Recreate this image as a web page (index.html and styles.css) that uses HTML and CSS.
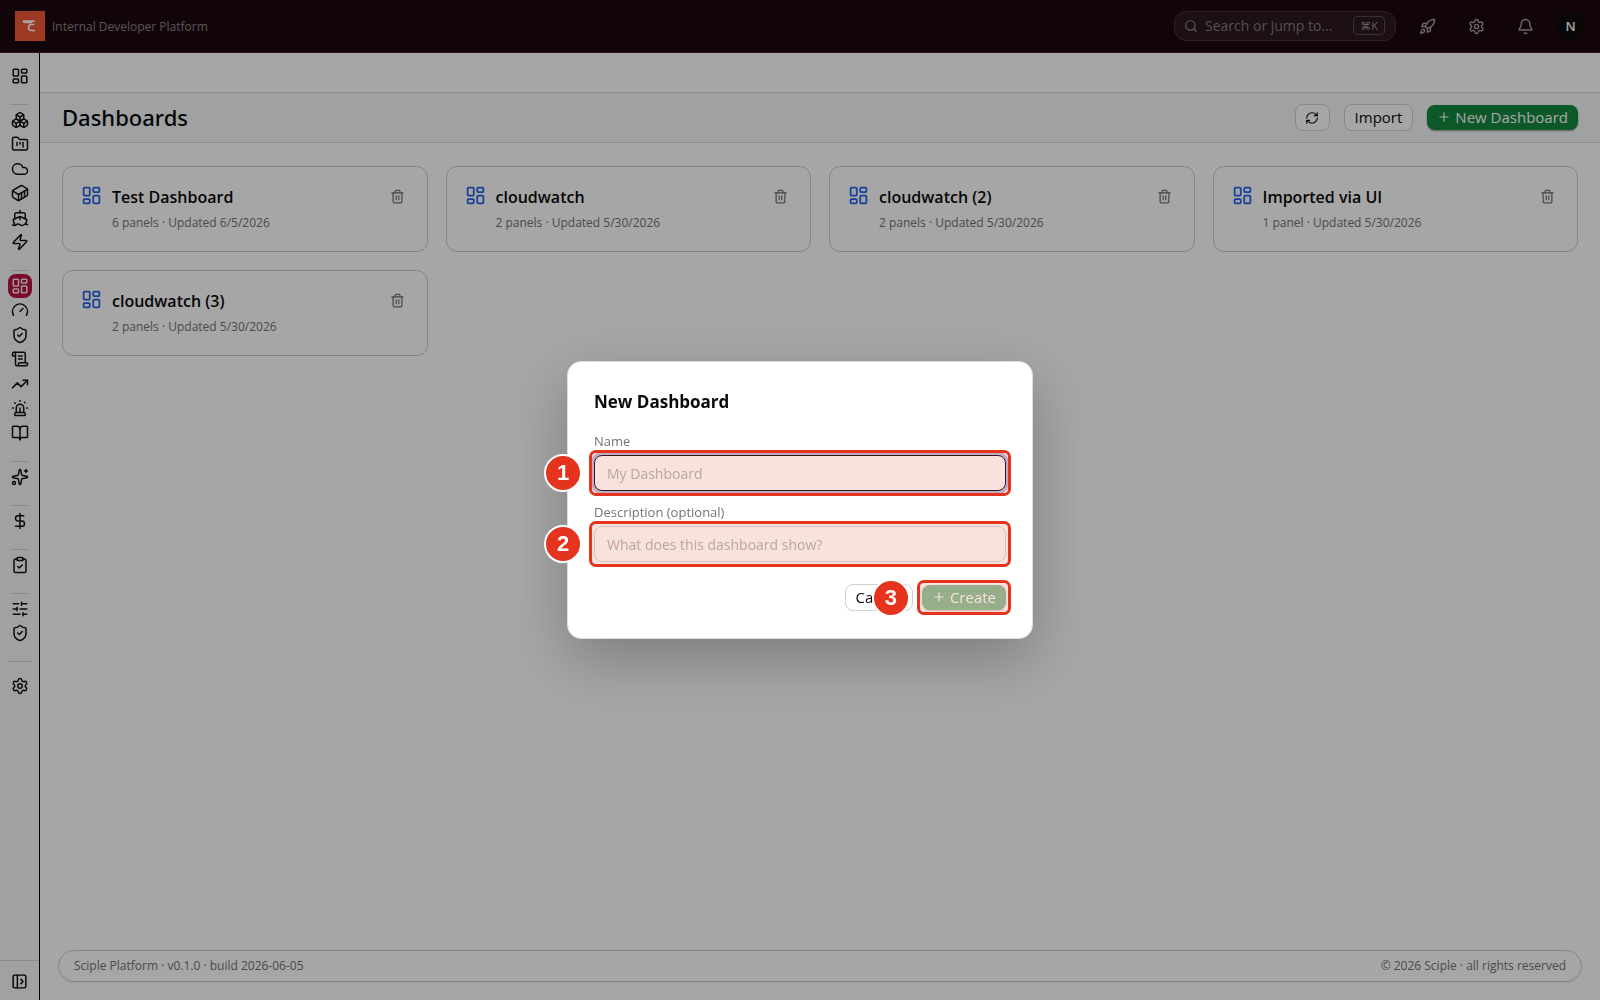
FILE: index.html
```html
<!DOCTYPE html>
<html lang="en">
<head>
<meta charset="UTF-8">
<meta name="viewport" content="width=device-width, initial-scale=1">
<title>Dashboards</title>
<link rel="stylesheet" href="styles.css">
</head>
<body>
	<!-- icon sprite -->
	<svg class="sprite" aria-hidden="true">
		<symbol id="i-dash" viewBox="0 0 24 24"><rect width="7" height="9" x="3" y="3" rx="1"/><rect width="7" height="5" x="14" y="3" rx="1"/><rect width="7" height="9" x="14" y="12" rx="1"/><rect width="7" height="5" x="3" y="16" rx="1"/></symbol>
		<symbol id="i-boxes" viewBox="0 0 24 24"><path d="M2.97 12.92A2 2 0 0 0 2 14.63v3.24a2 2 0 0 0 .97 1.71l3 1.8a2 2 0 0 0 2.06 0L12 19v-5.5l-5-3-4.03 2.42Z"/><path d="m7 16.5-4.74-2.85"/><path d="m7 16.5 5-3"/><path d="M7 16.5v5.17"/><path d="M12 13.5V19l3.97 2.38a2 2 0 0 0 2.06 0l3-1.8a2 2 0 0 0 .97-1.71v-3.24a2 2 0 0 0-.97-1.71L17 10.5l-5 3Z"/><path d="m17 16.5-5-3"/><path d="m17 16.5 4.74-2.85"/><path d="M17 16.5v5.17"/><path d="M7.97 4.42A2 2 0 0 0 7 6.13v4.37l5 3 5-3V6.13a2 2 0 0 0-.97-1.71l-3-1.8a2 2 0 0 0-2.06 0l-3 1.8Z"/><path d="M12 8 7.26 5.15"/><path d="m12 8 4.74-2.85"/><path d="M12 13.5V8"/></symbol>
		<symbol id="i-folder" viewBox="0 0 24 24"><path d="M4 20h16a2 2 0 0 0 2-2V8a2 2 0 0 0-2-2h-7.93a2 2 0 0 1-1.66-.9l-.82-1.2A2 2 0 0 0 7.93 3H4a2 2 0 0 0-2 2v13c0 1.1.9 2 2 2Z"/><path d="M8 10v4"/><path d="M12 10v2"/><path d="M16 10v6"/></symbol>
		<symbol id="i-cloud" viewBox="0 0 24 24"><path d="M17.5 19H9a7 7 0 1 1 6.71-9h1.79a4.5 4.5 0 1 1 0 9Z"/></symbol>
		<symbol id="i-container" viewBox="0 0 24 24"><path d="M22 7.7c0-.6-.4-1.2-.8-1.5l-6.3-3.9a1.72 1.72 0 0 0-1.7 0l-10.3 6c-.5.2-.9.8-.9 1.4v6.6c0 .5.4 1.2.8 1.5l6.3 3.9a1.72 1.72 0 0 0 1.7 0l10.3-6c.5-.3.9-1 .9-1.5Z"/><path d="M10 21.9V14L2.1 9.1"/><path d="m10 14 11.9-6.9"/><path d="M14 19.8v-8.1"/><path d="M18 17.5V9.4"/></symbol>
		<symbol id="i-ship" viewBox="0 0 24 24"><path d="M12 10.189V14"/><path d="M12 2v3"/><path d="M19 13V7a2 2 0 0 0-2-2H7a2 2 0 0 0-2 2v6"/><path d="M19.38 20A11.6 11.6 0 0 0 21 14l-8.188-3.639a2 2 0 0 0-1.624 0L3 14a11.6 11.6 0 0 0 2.81 7.76"/><path d="M2 21c.6.5 1.2 1 2.5 1 2.5 0 2.5-2 5-2 1.3 0 1.9.5 2.5 1s1.2 1 2.5 1c2.5 0 2.5-2 5-2 1.3 0 1.9.5 2.5 1"/></symbol>
		<symbol id="i-zap" viewBox="0 0 24 24"><path d="M4 14a1 1 0 0 1-.78-1.63l9.9-10.2a.5.5 0 0 1 .86.46l-1.92 6.02A1 1 0 0 0 13 10h7a1 1 0 0 1 .78 1.63l-9.9 10.2a.5.5 0 0 1-.86-.46l1.92-6.02A1 1 0 0 0 11 14z"/></symbol>
		<symbol id="i-gauge" viewBox="0 0 24 24"><path d="m12 14 4-4"/><path d="M3.34 19a10 10 0 1 1 17.32 0"/></symbol>
		<symbol id="i-shield" viewBox="0 0 24 24"><path d="M20 13c0 5-3.5 7.5-7.66 8.95a1 1 0 0 1-.67-.01C7.5 20.5 4 18 4 13V6a1 1 0 0 1 1-1c2 0 4.5-1.2 6.24-2.72a1.17 1.17 0 0 1 1.52 0C14.51 3.81 17 5 19 5a1 1 0 0 1 1 1z"/><path d="m9 12 2 2 4-4"/></symbol>
		<symbol id="i-scroll" viewBox="0 0 24 24"><path d="M15 12h-5"/><path d="M15 8h-5"/><path d="M19 17V5a2 2 0 0 0-2-2H4"/><path d="M8 21h12a2 2 0 0 0 2-2v-1a1 1 0 0 0-1-1H11a1 1 0 0 0-1 1v1a2 2 0 1 1-4 0V5a2 2 0 1 0-4 0v2a1 1 0 0 0 1 1h3"/></symbol>
		<symbol id="i-trend" viewBox="0 0 24 24"><path d="M16 7h6v6"/><path d="m22 7-8.5 8.5-5-5L2 17"/></symbol>
		<symbol id="i-siren" viewBox="0 0 24 24"><path d="M7 18v-6a5 5 0 1 1 10 0v6"/><path d="M5 21a1 1 0 0 0 1 1h12a1 1 0 0 0 1-1v-1a2 2 0 0 0-2-2H7a2 2 0 0 0-2 2z"/><path d="M21 12h1"/><path d="M18.5 4.5 18 5"/><path d="M2 12h1"/><path d="M12 2v1"/><path d="m4.929 4.929.707.707"/><path d="M12 12v6"/></symbol>
		<symbol id="i-book" viewBox="0 0 24 24"><path d="M12 7v14"/><path d="M3 18a1 1 0 0 1-1-1V4a1 1 0 0 1 1-1h5a4 4 0 0 1 4 4 4 4 0 0 1 4-4h5a1 1 0 0 1 1 1v13a1 1 0 0 1-1 1h-6a3 3 0 0 0-3 3 3 3 0 0 0-3-3z"/></symbol>
		<symbol id="i-sparkles" viewBox="0 0 24 24"><path d="M11.017 2.814a1 1 0 0 1 1.966 0l1.051 5.558a2 2 0 0 0 1.594 1.594l5.558 1.051a1 1 0 0 1 0 1.966l-5.558 1.051a2 2 0 0 0-1.594 1.594l-1.051 5.558a1 1 0 0 1-1.966 0l-1.051-5.558a2 2 0 0 0-1.594-1.594l-5.558-1.051a1 1 0 0 1 0-1.966l5.558-1.051a2 2 0 0 0 1.594-1.594z"/><path d="M20 2v4"/><path d="M22 4h-4"/><circle cx="4" cy="20" r="2"/></symbol>
		<symbol id="i-dollar" viewBox="0 0 24 24"><path d="M12 2v20"/><path d="M17 5H9.5a3.5 3.5 0 0 0 0 7h5a3.5 3.5 0 0 1 0 7H6"/></symbol>
		<symbol id="i-clipboard" viewBox="0 0 24 24"><rect width="8" height="4" x="8" y="2" rx="1"/><path d="M16 4h2a2 2 0 0 1 2 2v14a2 2 0 0 1-2 2H6a2 2 0 0 1-2-2V6a2 2 0 0 1 2-2h2"/><path d="m9 14 2 2 4-4"/></symbol>
		<symbol id="i-sliders" viewBox="0 0 24 24"><path d="M10 5H3"/><path d="M12 19H3"/><path d="M14 3v4"/><path d="M16 17v4"/><path d="M21 12h-9"/><path d="M21 19h-5"/><path d="M21 5h-7"/><path d="M8 10v4"/><path d="M8 12H3"/></symbol>
		<symbol id="i-gear" viewBox="0 0 24 24"><path d="M9.671 4.136a2.34 2.34 0 0 1 4.659 0 2.34 2.34 0 0 0 3.319 1.915 2.34 2.34 0 0 1 2.33 4.033 2.34 2.34 0 0 0 0 3.831 2.34 2.34 0 0 1-2.33 4.033 2.34 2.34 0 0 0-3.319 1.915 2.34 2.34 0 0 1-4.659 0 2.34 2.34 0 0 0-3.32-1.915 2.34 2.34 0 0 1-2.33-4.033 2.34 2.34 0 0 0 0-3.831A2.34 2.34 0 0 1 6.35 6.051a2.34 2.34 0 0 0 3.319-1.915"/><circle cx="12" cy="12" r="3"/></symbol>
		<symbol id="i-panel" viewBox="0 0 24 24"><rect width="18" height="18" x="3" y="3" rx="2"/><path d="M9 3v18"/><path d="m14 9 3 3-3 3"/></symbol>
		<symbol id="i-search" viewBox="0 0 24 24"><circle cx="11" cy="11" r="8"/><path d="m21 21-4.3-4.3"/></symbol>
		<symbol id="i-rocket" viewBox="0 0 24 24"><path d="M4.5 16.5c-1.5 1.26-2 5-2 5s3.74-.5 5-2c.71-.84.7-2.13-.09-2.91a2.18 2.18 0 0 0-2.91-.09z"/><path d="m12 15-3-3a22 22 0 0 1 2-3.95A12.88 12.88 0 0 1 22 2c0 2.72-.78 7.5-6 11a22.35 22.35 0 0 1-4 2z"/><path d="M9 12H4s.55-3.03 2-4c1.62-1.08 5 0 5 0"/><path d="M12 15v5s3.03-.55 4-2c1.08-1.62 0-5 0-5"/></symbol>
		<symbol id="i-bell" viewBox="0 0 24 24"><path d="M10.268 21a2 2 0 0 0 3.464 0"/><path d="M3.262 15.326A1 1 0 0 0 4 17h16a1 1 0 0 0 .74-1.673C19.41 13.956 18 12.499 18 8A6 6 0 0 0 6 8c0 4.499-1.411 5.956-2.738 7.326"/></symbol>
		<symbol id="i-refresh" viewBox="0 0 24 24"><path d="M3 12a9 9 0 0 1 9-9 9.75 9.75 0 0 1 6.74 2.74L21 8"/><path d="M21 3v5h-5"/><path d="M21 12a9 9 0 0 1-9 9 9.75 9.75 0 0 1-6.74-2.74L3 16"/><path d="M8 16H3v5"/></symbol>
		<symbol id="i-plus" viewBox="0 0 24 24"><path d="M5 12h14"/><path d="M12 5v14"/></symbol>
		<symbol id="i-trash" viewBox="0 0 24 24"><path d="M3 6h18"/><path d="M19 6v14a2 2 0 0 1-2 2H7a2 2 0 0 1-2-2V6"/><path d="M8 6V4a2 2 0 0 1 2-2h4a2 2 0 0 1 2 2v2"/><path d="M10 11v6"/><path d="M14 11v6"/></symbol>
	</svg>

	<div class="app">
		<header class="topbar">
			<a class="brand" href="#">
				<svg class="logo" viewBox="0 0 30 30"><rect width="30" height="30" fill="#f05a36"/><path d="M8 10h9q2 0 2.500 1M8 10q1 1.500 3 1.500h6M19.500 13.500h-3q-3 0-3 3t3 3h3.500" fill="none" stroke="#fff" stroke-width="1.600"/></svg>
				<span>Internal Developer Platform</span>
			</a>
			<div class="topbar-right">
				<label class="search">
					<svg class="icon"><use href="#i-search"/></svg>
					<input type="text" placeholder="Search or jump to..." aria-label="Search">
					<kbd>⌘K</kbd>
				</label>
				<button class="top-btn" aria-label="Deploy"><svg class="icon"><use href="#i-rocket"/></svg></button>
				<button class="top-btn" aria-label="Settings"><svg class="icon"><use href="#i-gear"/></svg></button>
				<button class="top-btn" aria-label="Notifications"><svg class="icon"><use href="#i-bell"/></svg></button>
				<button class="avatar">N</button>
			</div>
		</header>

		<div class="body">
			<nav class="sidebar">
				<ul>
					<li><a href="#"><svg class="icon"><use href="#i-dash"/></svg></a></li>
				</ul>
				<ul>
					<li><a href="#"><svg class="icon"><use href="#i-boxes"/></svg></a></li>
					<li><a href="#"><svg class="icon"><use href="#i-folder"/></svg></a></li>
					<li><a href="#"><svg class="icon"><use href="#i-cloud"/></svg></a></li>
					<li><a href="#"><svg class="icon"><use href="#i-container"/></svg></a></li>
					<li><a href="#"><svg class="icon"><use href="#i-ship"/></svg></a></li>
					<li><a href="#"><svg class="icon"><use href="#i-zap"/></svg></a></li>
				</ul>
				<ul>
					<li><a class="active" href="#"><svg class="icon"><use href="#i-dash"/></svg></a></li>
					<li><a href="#"><svg class="icon"><use href="#i-gauge"/></svg></a></li>
					<li><a href="#"><svg class="icon"><use href="#i-shield"/></svg></a></li>
					<li><a href="#"><svg class="icon"><use href="#i-scroll"/></svg></a></li>
					<li><a href="#"><svg class="icon"><use href="#i-trend"/></svg></a></li>
					<li><a href="#"><svg class="icon"><use href="#i-siren"/></svg></a></li>
					<li><a href="#"><svg class="icon"><use href="#i-book"/></svg></a></li>
				</ul>
				<ul>
					<li><a href="#"><svg class="icon"><use href="#i-sparkles"/></svg></a></li>
				</ul>
				<ul>
					<li><a href="#"><svg class="icon"><use href="#i-dollar"/></svg></a></li>
				</ul>
				<ul>
					<li><a href="#"><svg class="icon"><use href="#i-clipboard"/></svg></a></li>
				</ul>
				<ul>
					<li><a href="#"><svg class="icon"><use href="#i-sliders"/></svg></a></li>
					<li><a href="#"><svg class="icon"><use href="#i-shield"/></svg></a></li>
				</ul>
				<ul class="system">
					<li><a href="#"><svg class="icon"><use href="#i-gear"/></svg></a></li>
				</ul>
				<div class="sidebar-foot">
					<button aria-label="Expand sidebar"><svg class="icon"><use href="#i-panel"/></svg></button>
				</div>
			</nav>

			<main class="main">
				<div class="tabs"></div>
				<div class="page-head">
					<h1>Dashboards</h1>
					<div class="actions">
						<button class="btn btn-icon" aria-label="Refresh"><svg class="icon"><use href="#i-refresh"/></svg></button>
						<button class="btn">Import</button>
						<button class="btn btn-primary"><svg class="icon"><use href="#i-plus"/></svg>New Dashboard</button>
					</div>
				</div>

				<div class="cards">
					<article class="card">
						<svg class="icon"><use href="#i-dash"/></svg>
						<div class="card-text">
							<h2>Test Dashboard</h2>
							<p>6 panels · Updated 6/5/2026</p>
						</div>
						<button class="delete" aria-label="Delete"><svg class="icon"><use href="#i-trash"/></svg></button>
					</article>
					<article class="card">
						<svg class="icon"><use href="#i-dash"/></svg>
						<div class="card-text">
							<h2>cloudwatch</h2>
							<p>2 panels · Updated 5/30/2026</p>
						</div>
						<button class="delete" aria-label="Delete"><svg class="icon"><use href="#i-trash"/></svg></button>
					</article>
					<article class="card">
						<svg class="icon"><use href="#i-dash"/></svg>
						<div class="card-text">
							<h2>cloudwatch (2)</h2>
							<p>2 panels · Updated 5/30/2026</p>
						</div>
						<button class="delete" aria-label="Delete"><svg class="icon"><use href="#i-trash"/></svg></button>
					</article>
					<article class="card">
						<svg class="icon"><use href="#i-dash"/></svg>
						<div class="card-text">
							<h2>Imported via UI</h2>
							<p>1 panel · Updated 5/30/2026</p>
						</div>
						<button class="delete" aria-label="Delete"><svg class="icon"><use href="#i-trash"/></svg></button>
					</article>
					<article class="card">
						<svg class="icon"><use href="#i-dash"/></svg>
						<div class="card-text">
							<h2>cloudwatch (3)</h2>
							<p>2 panels · Updated 5/30/2026</p>
						</div>
						<button class="delete" aria-label="Delete"><svg class="icon"><use href="#i-trash"/></svg></button>
					</article>
				</div>

				<footer class="footer">
					<span>Sciple Platform · v0.1.0 · build 2026-06-05</span>
					<span>© 2026 Sciple · all rights reserved</span>
				</footer>
			</main>
		</div>
	</div>

	<div class="overlay">
		<form class="modal" role="dialog" aria-labelledby="modal-title">
			<h2 id="modal-title">New Dashboard</h2>
			<label for="name">Name</label>
			<div class="field">
				<input class="focused" id="name" type="text" placeholder="My Dashboard">
				<div class="mark"></div>
				<div class="step">1</div>
			</div>
			<label for="desc">Description (optional)</label>
			<div class="field">
				<input id="desc" type="text" placeholder="What does this dashboard show?">
				<div class="mark"></div>
				<div class="step">2</div>
			</div>
			<div class="modal-actions">
				<button class="btn" type="button">Cancel</button>
				<div class="field">
					<button class="btn btn-primary" type="submit" disabled><svg class="icon"><use href="#i-plus"/></svg>Create</button>
					<div class="mark"></div>
					<div class="step">3</div>
				</div>
			</div>
		</form>
	</div>
</body>
</html>
```
FILE: styles.css
```css
* {
	box-sizing: border-box;
}

body {
	margin: 0;
	font-family: "Open Sans", "Noto Sans", sans-serif;
	font-size: 12px;
	color: #0a0a0a;
	background: #fff;
}

h1, h2, p, ul {
	margin: 0;
	padding: 0;
}

button, input {
	font-family: inherit;
}

button {
	cursor: pointer;
}

.sprite {
	display: none;
}

.icon {
	width: 18px;
	height: 18px;
	flex: none;
	fill: none;
	stroke: currentColor;
	stroke-width: 2;
	stroke-linecap: round;
	stroke-linejoin: round;
}

.app {
	display: flex;
	flex-direction: column;
	min-height: 100vh;
}

/* top bar */
.topbar {
	display: flex;
	align-items: center;
	justify-content: space-between;
	height: 53px;
	padding: 0 16px 0 15px;
	background: #1c0810;
	border-bottom: 1px solid #45202e;
	color: #a89ea2;
}

.brand {
	display: flex;
	align-items: center;
	gap: 7px;
	color: #8f8386;
	text-decoration: none;
}

.logo {
	width: 30px;
	height: 30px;
}

.topbar-right {
	display: flex;
	align-items: center;
}

.search {
	display: flex;
	align-items: center;
	gap: 7px;
	width: 222px;
	height: 30px;
	margin-right: 14px;
	padding: 0 10px 1px 9px;
	border: 1px solid #46343b;
	border-radius: 12px;
	background: #2c1a21;
	color: #9a8f93;
}

.search .icon {
	width: 14px;
	height: 14px;
}

.search input {
	flex: 1;
	min-width: 0;
	padding: 0;
	border: 0;
	outline: 0;
	background: none;
	color: inherit;
	font-size: 14px;
}

.search input::placeholder {
	color: #85797d;
}

kbd {
	padding: 0 6px;
	border: 1px solid #5a4a50;
	border-radius: 4px;
	font-family: "Open Sans", "DejaVu Sans", sans-serif;
	font-size: 11px;
	line-height: 17px;
}

.top-btn {
	display: flex;
	align-items: center;
	justify-content: center;
	width: 35px;
	height: 35px;
	margin-right: 14px;
	padding: 0;
	border: 0;
	background: none;
	color: inherit;
}

.top-btn .icon {
	width: 17px;
	height: 17px;
}

.avatar {
	width: 27px;
	height: 27px;
	padding: 0;
	border: 0;
	border-radius: 50%;
	background: #0c0c0c;
	color: #fff;
	font-size: 13px;
	font-weight: 600;
}

/* sidebar */
.body {
	display: flex;
	flex: 1;
}

.sidebar {
	display: flex;
	flex-direction: column;
	width: 40px;
	padding-top: 11px;
	border-right: 1px solid #000;
	background: #f6f8fb;
}

.sidebar ul {
	padding: 0 7px 0 8px;
	list-style: none;
}

.sidebar ul + ul::before {
	content: "";
	display: block;
	height: 1px;
	margin: 16px 3px 3px 2px;
	background: #d2d4d7;
}

.sidebar li:nth-child(even):not(:last-child) {
	margin-bottom: 1px;
}

.sidebar a {
	display: flex;
	align-items: center;
	justify-content: center;
	height: 24px;
	border-radius: 8px;
	color: #111;
}

.sidebar .active {
	background: #b8133f;
	color: #f3e6ea;
}

.sidebar ul.system::before {
	margin: 16px 0 12px -1px;
}

.sidebar-foot {
	display: flex;
	justify-content: center;
	margin-top: auto;
	padding: 12px 0 10px;
	border-top: 1px solid #d2d4d7;
}

.sidebar-foot button {
	display: flex;
	padding: 0;
	border: 0;
	background: none;
}

.sidebar-foot .icon {
	width: 17px;
	height: 17px;
}

/* main area */
.main {
	display: flex;
	flex-direction: column;
	flex: 1;
}

.tabs {
	height: 40px;
	border-bottom: 1px solid #d2d4d7;
}

.page-head {
	display: flex;
	align-items: center;
	justify-content: space-between;
	height: 50px;
	padding: 0 22px;
	border-bottom: 1px solid #d2d4d7;
	background: #f6f8fb;
}

.page-head h1 {
	padding-bottom: 1px;
	font-family: "Noto Sans", sans-serif;
	font-size: 22px;
	font-weight: 500;
}

.actions {
	display: flex;
	align-items: center;
	gap: 14px;
}

.btn {
	display: flex;
	align-items: center;
	justify-content: center;
	gap: 4px;
	height: 27px;
	padding: 0 10px 2px;
	border: 1px solid #cfd2d5;
	border-radius: 8px;
	background: #fff;
	color: #0a0a0a;
	font-size: 15px;
}

.btn .icon {
	width: 14px;
	height: 14px;
}

.btn-icon {
	width: 35px;
	padding: 0;
}

.btn-primary {
	height: 25px;
	border: 0;
	background: #158840;
	color: #fff;
	box-shadow: 0 1px 2px rgba(0, 0, 0, .4);
}

.btn-primary:disabled {
	opacity: .5;
}

.cards {
	display: grid;
	grid-template-columns: repeat(4, 1fr);
	gap: 18px;
	padding: 23px 22px;
}

.card {
	display: flex;
	align-items: flex-start;
	padding: 18px;
	border: 1px solid #cfcfcf;
	border-radius: 11px;
}

.card > .icon {
	width: 21px;
	height: 21px;
	color: #2563eb;
}

.card-text {
	flex: 1;
	padding-left: 10px;
}

.card h2 {
	font-size: 16px;
	font-weight: 600;
	line-height: 24px;
}

.card p {
	padding: 5px 0 1px;
	color: #737373;
	line-height: 18px;
}

.delete {
	display: flex;
	padding: 4px;
	border: 0;
	background: none;
	color: #737373;
}

.delete .icon {
	width: 15px;
	height: 15px;
}

.footer {
	display: flex;
	align-items: center;
	justify-content: space-between;
	height: 32px;
	margin: auto 18px 18px;
	padding: 0 15px 1px;
	border: 1px solid #cfcfcf;
	border-radius: 16px;
	box-shadow: 0 1px 2px rgba(0, 0, 0, .08);
	color: #737373;
}

/* new dashboard dialog */
.overlay {
	position: fixed;
	inset: 0;
	display: flex;
	align-items: center;
	justify-content: center;
	background: rgba(0, 0, 0, .35);
}

.modal {
	width: 466px;
	padding: 27px 26px;
	border: 1px solid #ddd;
	border-radius: 14px;
	background: #fff;
	box-shadow: 0 20px 60px rgba(0, 0, 0, .25);
}

.modal h2 {
	margin-bottom: 16px;
	font-size: 17px;
	font-weight: 700;
	line-height: 26px;
}

.modal label {
	display: block;
	margin-bottom: 4px;
	color: #737373;
	font-size: 13px;
	line-height: 20px;
}

.field {
	position: relative;
}

.modal input {
	display: block;
	width: 100%;
	height: 36px;
	margin-bottom: 11px;
	padding: 0 12px;
	border: 1px solid #d9d9d9;
	border-radius: 8px;
	outline: 0;
	font-size: 14px;
}

.modal input::placeholder {
	color: #b8b8b8;
}

.modal input.focused {
	border-color: #171717;
	box-shadow: 0 0 0 3px #b9bfe6;
}

.modal-actions {
	display: flex;
	align-items: center;
	justify-content: flex-end;
	gap: 9px;
	margin-top: 22px;
}

/* numbered callouts over the form */
.mark {
	position: absolute;
	inset: -5px;
	border: 3px solid #e5341d;
	border-radius: 7px;
	background: rgba(229, 52, 29, .15);
	pointer-events: none;
}

.step {
	position: absolute;
	top: 50%;
	left: -31px;
	width: 38px;
	height: 38px;
	margin: -19px;
	border: 2px solid #fff;
	border-radius: 50%;
	background: #e5341d;
	color: #fff;
	font: bold 22px/34px "Liberation Sans", Arial, sans-serif;
	text-align: center;
}
```
